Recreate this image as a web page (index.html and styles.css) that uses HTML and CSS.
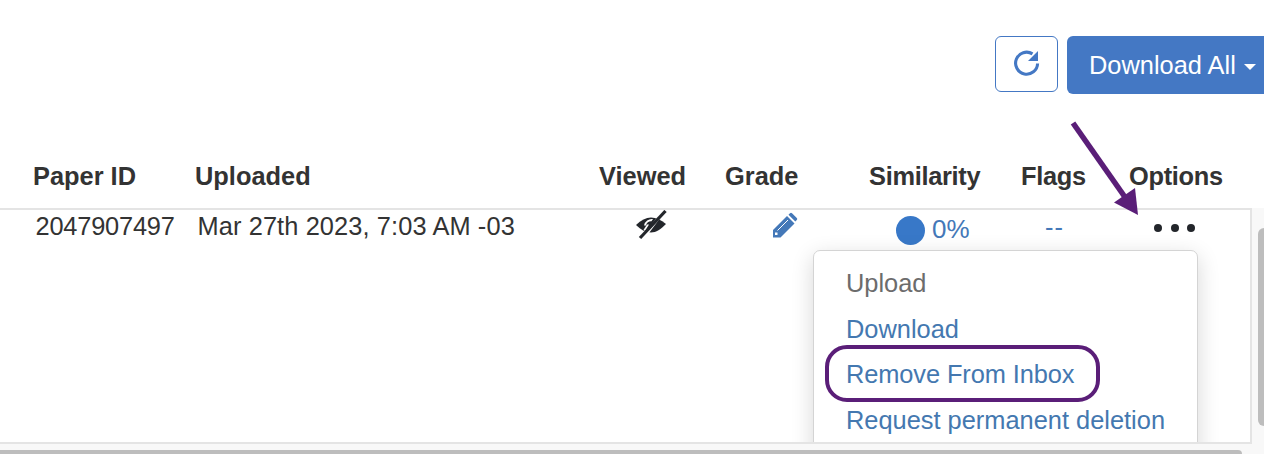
FILE: index.html
```html
<!DOCTYPE html>
<html lang="en">
<head>
<meta charset="utf-8">
<title>Paper inbox</title>
<link rel="stylesheet" href="styles.css">
</head>
<body>
<div class="page">
  <div class="toolbar">
    <button class="btn-refresh" aria-label="Refresh">
      <svg viewBox="0 0 26 26" width="26" height="26"><path d="M23.600 13.500A11 11 0 1 1 18.500 3.900" fill="none" stroke="#4478c4" stroke-width="3.100"/><path d="M24 1V11H14z" fill="#4478c4"/></svg>
    </button>
    <button class="btn-download">Download All<span class="caret"></span></button>
  </div>
  <div class="cols head">
    <div>Paper ID</div>
    <div>Uploaded</div>
    <div>Viewed</div>
    <div>Grade</div>
    <div class="tight">Similarity</div>
    <div class="tight">Flags</div>
    <div class="tight">Options</div>
  </div>
  <div class="table-area">
    <div class="table-pane">
      <div class="cols row">
        <div class="c-id">2047907497</div>
        <div class="c-date">Mar 27th 2023, 7:03 AM -03</div>
        <div class="c-view">
          <svg viewBox="0 0 34 30" width="34" height="30"><path d="M3 15C8 10 13 7.500 18 7.500S28 10 33 14C28 19 23 22.500 18 22.500S8 20 3 15Z" fill="#23262b"/><path d="M11 15.500a8 8 0 0 1 9-6.500l-1.500 2.200a5 5 0 0 0-5.500 4.300z" fill="#fff"/><path d="M14 14.500h2l-4 6.500-1.500-1z" fill="#fff"/><path d="M24 7.500 9 26.500l4 .5L26.500 9z" fill="#fff"/><path d="M32.500 1 7 28" stroke="#23262b" stroke-width="3.200"/></svg>
        </div>
        <div class="c-grade">
          <svg viewBox="0 0 26 26" width="26" height="26"><path d="M1 25.500v-7.500L15 4l7.500 7.500L8.500 25.500z" fill="#4478b8"/><path d="M5.500 18.500 16 8" stroke="#fff" stroke-width="1"/><path d="M3 20.500h2.500V23H3z" fill="#fff"/><path d="M16.500 2.700 18 1.200q1-1 2 0l4.800 4.800q1 1 0 2L23.300 9.500z" fill="#4478b8"/></svg>
        </div>
        <div class="c-sim"><span class="dot"></span><span>0%</span></div>
        <div class="c-flags">--</div>
        <div class="c-opts"><i></i><i></i><i></i></div>
      </div>
      <div class="menu">
        <div class="menu-item muted">Upload</div>
        <div class="menu-item">Download</div>
        <div class="menu-item tight-item">Remove From Inbox</div>
        <div class="menu-item">Request permanent deletion</div>
      </div>
      <div class="ring"></div>
    </div>
    <div class="vtrack"><div class="vthumb"></div></div>
  </div>
  <div class="htrack"><div class="hthumb"></div></div>
  <svg class="arrow" viewBox="0 0 80 100" width="80" height="100"><path d="M5 2 59 79" stroke="#5a1e78" stroke-width="5.500"/><path d="M70 94 46 81.500 67 67z" fill="#5a1e78"/></svg>
</div>
</body>
</html>
```
FILE: styles.css
```css
* { box-sizing: border-box; }
html, body { margin: 0; padding: 0; }
body {
  width: 1264px;
  height: 454px;
  overflow: hidden;
  background: #fff;
  font-family: "Liberation Sans", Arial, sans-serif;
  font-size: 25.400px;
  color: #333;
}
.page { position: relative; width: 1264px; height: 454px; overflow: hidden; }
.toolbar {
  display: flex;
  align-items: flex-start;
  gap: 9px;
  height: 146px;
  padding: 36px 0 0 995px;
}
.btn-refresh {
  flex: none;
  display: flex;
  align-items: center;
  justify-content: center;
  width: 63px;
  height: 56px;
  padding: 0 0 2px;
  background: #fff;
  border: 1px solid #4478c4;
  border-radius: 6px;
}
.btn-download {
  flex: none;
  display: flex;
  align-items: center;
  width: 215px;
  height: 58px;
  padding: 1px 0 0 22px;
  background: #4478c4;
  border: 0;
  border-radius: 6px;
  color: #fff;
  font-family: inherit;
  font-size: 25.400px;
  white-space: nowrap;
}
.caret {
  margin: 2px 0 0 8px;
  border-left: 6px solid transparent;
  border-right: 6px solid transparent;
  border-top: 6px solid #fff;
}
.cols {
  display: grid;
  grid-template-columns: 162px 404px 126px 144px 152px 108px 135px;
  padding-left: 33px;
}
.head {
  height: 62px;
  align-items: start;
  font-weight: 700;
  line-height: 61px;
}
.tight { letter-spacing: -.3px; }
.tight-item { letter-spacing: -.1px; }
.table-area { display: flex; height: 236px; }
.table-pane {
  position: relative;
  flex: none;
  width: 1252px;
  height: 236px;
  border-top: 2px solid #e4e4e4;
  border-bottom: 2px solid #e4e4e4;
  border-right: 2px solid #e4e4e4;
  overflow: hidden;
}
.row { height: 40px; line-height: 32px; color: #333; align-items: start; }
.c-id, .c-date { padding-left: 2.500px; white-space: nowrap; }
.c-id { letter-spacing: -.2px; }
.c-date { letter-spacing: .1px; }
.c-view { padding-left: 34px; line-height: 0; }
.c-grade { padding: 2px 0 0 47px; line-height: 0; }
.c-sim {
  display: flex;
  align-items: flex-start;
  gap: 7px;
  padding: 6px 0 0 27px;
  color: #4478b8;
  font-size: 26px;
  line-height: 26px;
}
.dot { flex: none; width: 29px; height: 29px; border-radius: 50%; background: #3878c8; }
.c-flags { padding-left: 24px; color: #4478b8; line-height: 34px; letter-spacing: 1px; }
.c-opts { display: flex; gap: 8.500px; padding: 13.500px 0 0 25px; }
.c-opts i { width: 8px; height: 8px; border-radius: 50%; background: #23262b; }
.menu {
  position: absolute;
  left: 813px;
  top: 40px;
  width: 385px;
  height: 220px;
  padding: 10px 0 0 32px;
  background: #fff;
  border: 1px solid #d4d4d4;
  border-radius: 7px;
  box-shadow: 0 6px 22px rgba(0, 0, 0, .16);
}
.menu-item { height: 45.500px; line-height: 45px; color: #4478b0; white-space: nowrap; }
.menu-item.muted { color: #6c6c6c; }
.ring {
  position: absolute;
  left: 825px;
  top: 135px;
  width: 275px;
  height: 57px;
  border: 4.500px solid #5a1e78;
  border-radius: 22px;
}
.vtrack { flex: 1; background: #f8f8f8; display: flex; justify-content: flex-end; padding-top: 20px; }
.vthumb { width: 6px; height: 198px; background: #bdbdbd; border-radius: 8px 0 0 8px; }
.htrack { height: 10px; background: #f8f8f8; padding-top: 6px; }
.hthumb { width: 1242px; height: 4px; background: #bdbdbd; border-radius: 0 8px 0 0; }
.arrow { position: absolute; left: 1068px; top: 121px; }
```
